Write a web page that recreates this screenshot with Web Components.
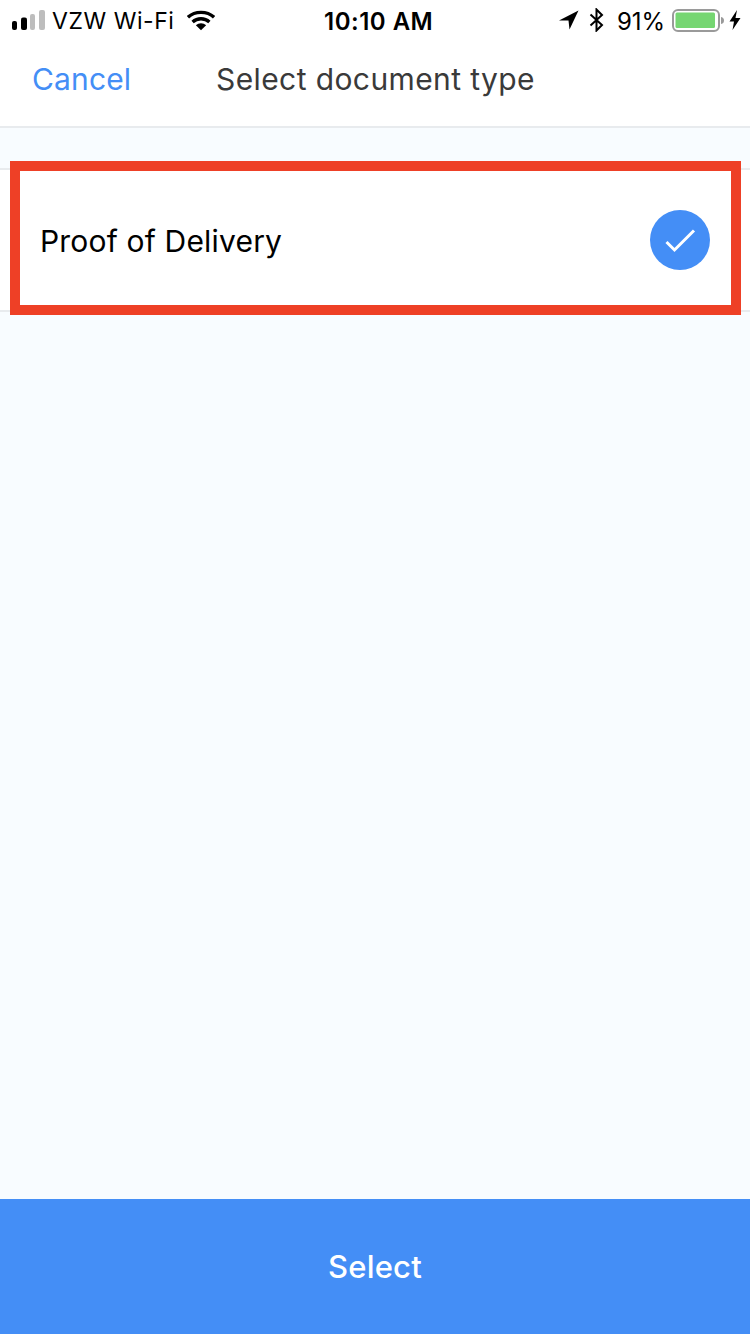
<!DOCTYPE html>
<html lang="en">
<head>
<meta charset="utf-8">
<title>Select document type</title>
<style>
  html, body { margin: 0; height: 100%; }
  body { font-family: Inter, "Liberation Sans", sans-serif; }
</style>
</head>
<body>
<doc-screen>
  <status-bar slot="status"></status-bar>
  <nav-header slot="header" action="Cancel">Select document type</nav-header>
  <doc-row slot="body" highlighted>Proof of Delivery</doc-row>
  <primary-button slot="footer">Select</primary-button>
</doc-screen>

<script>
class DocScreen extends HTMLElement {
  constructor() {
    super();
    this.attachShadow({ mode: "open" }).innerHTML = `
      <style>
        :host { display: flex; flex-direction: column; width: 750px; height: 1334px; background: #f8fcff; }
        .body { flex: 1; padding-top: 40px; }
      </style>
      <slot name="status"></slot>
      <slot name="header"></slot>
      <div class="body"><slot name="body"></slot></div>
      <slot name="footer"></slot>
    `;
  }
}

class StatusBar extends HTMLElement {
  constructor() {
    super();
    this.attachShadow({ mode: "open" }).innerHTML = `
      <style>
        :host { display: grid; grid-template-columns: 324px 108px 1fr; align-items: center; height: 40px; background: #fff; color: #000; font: 400 23px Inter, "Liberation Sans", sans-serif; }
        .left, .right { display: flex; align-items: center; }
        .left { padding-left: 12px; }
        .signal { display: block; margin-right: 7px; }
        .carrier { letter-spacing: 0.55px; white-space: nowrap; padding-top: 1px; }
        .wifi { margin-left: 13px; }
        .time { font-weight: 600; font-size: 24px; white-space: nowrap; text-align: center; letter-spacing: 0.5px; padding-top: 2px; }
        .right { padding-left: 127px; }
        .pct { margin: 0 7px 0 13px; font-size: 24px; white-space: nowrap; letter-spacing: -0.1px; padding-top: 2px; }
        .loc, .bt, .bat, .bolt { display: block; flex: none; }
        .bt { margin-left: 10px; }
        .bolt { margin-left: 5px; }
      </style>
      <div class="left">
        <svg class="signal" width="33" height="21" viewBox="0 0 33 21">
          <rect x="0" y="11" width="5" height="9" rx="2" fill="#000"/>
          <rect x="9" y="7.500" width="6" height="12.500" rx="2" fill="#000"/>
          <rect x="18" y="4" width="5" height="16" rx="2" fill="#bdbdbd"/>
          <rect x="27" y="0" width="6" height="20" rx="2" fill="#bdbdbd"/>
        </svg>
        <span class="carrier">VZW Wi-Fi</span>
        <svg class="wifi" width="28" height="21" viewBox="0 0 30 22">
          <path d="M1 7.500C8.500 0.500 21.500 0.500 29 7.500" fill="none" stroke="#000" stroke-width="3.600"/>
          <path d="M6 12.500C11 8 19 8 24 12.500" fill="none" stroke="#000" stroke-width="3.600"/>
          <path d="M9.500 16.200C12.500 13.200 17.500 13.200 20.500 16.200L15 21.500Z" fill="#000"/>
        </svg>
      </div>
      <div class="time">10:10 AM</div>
      <div class="right">
        <svg class="loc" width="20" height="20" viewBox="0 0 20 20"><path d="M0 10.500L19.500 0.500L10.500 19.500L9.500 10.500Z" fill="#000"/></svg>
        <svg class="bt" width="15" height="24" viewBox="0 0 15 24"><path d="M1.500 6.500L13 17L7.500 22.500V1.500L13 7L1.500 17.500" fill="none" stroke="#000" stroke-width="2"/></svg>
        <span class="pct">91%</span>
        <svg class="bat" width="52" height="24" viewBox="0 0 52 24">
          <rect x="1" y="2" width="46" height="21" rx="5" fill="none" stroke="#9a9a9a" stroke-width="2"/>
          <rect x="3.500" y="4.500" width="39.500" height="15.500" rx="1.500" fill="#76d672"/>
          <path d="M49 9C51.500 9.500 52 11 52 12.500C52 14 51.500 15.500 49 16Z" fill="#9a9a9a"/>
        </svg>
        <svg class="bolt" width="12" height="20" viewBox="0 0 12 20"><path d="M8 0L0.500 11.500H5L3.500 20L11.500 8H6.500Z" fill="#000"/></svg>
      </div>
    `;
  }
}

class NavHeader extends HTMLElement {
  constructor() {
    super();
    this.attachShadow({ mode: "open" }).innerHTML = `
      <style>
        :host { display: flex; align-items: center; box-sizing: border-box; height: 88px; padding: 0 0 8px 32px; background: #fff; border-bottom: 2px solid #e8ebee; font: 400 30px Inter, "Liberation Sans", sans-serif; white-space: nowrap; }
        .action { width: 184px; color: #448ef6; letter-spacing: 0.15px; }
        .title { color: #3a3a3a; letter-spacing: 0.4px; }
      </style>
      <span class="action"></span>
      <span class="title"><slot></slot></span>
    `;
    this.shadowRoot.querySelector(".action").textContent = this.getAttribute("action");
  }
}

class DocRow extends HTMLElement {
  constructor() {
    super();
    this.attachShadow({ mode: "open" }).innerHTML = `
      <style>
        :host { display: flex; align-items: center; justify-content: space-between; position: relative; box-sizing: border-box; height: 144px; padding: 0 40px; background: #fff; border-top: 2px solid #e8ebee; border-bottom: 2px solid #e8ebee; color: #000; font: 400 30px Inter, "Liberation Sans", sans-serif; }
        .label { padding-top: 2px; letter-spacing: 0.18px; }
        .check { display: block; }
        .mark { display: none; position: absolute; left: 10px; top: -9px; width: 731px; height: 154px; box-sizing: border-box; border: 10px solid #ee4026; pointer-events: none; }
        :host([highlighted]) .mark { display: block; }
      </style>
      <span class="label"><slot></slot></span>
      <svg class="check" width="60" height="60" viewBox="0 0 60 60">
        <circle cx="30" cy="30" r="30" fill="#448ef6"/>
        <path d="M16.500 32L24.500 40L44 20.500" fill="none" stroke="#fff" stroke-width="3"/>
      </svg>
      <div class="mark"></div>
    `;
  }
}

class PrimaryButton extends HTMLElement {
  constructor() {
    super();
    this.attachShadow({ mode: "open" }).innerHTML = `
      <style>
        :host { display: flex; align-items: center; justify-content: center; height: 135px; background: #448ef6; color: #fff; font: 500 31px Inter, "Liberation Sans", sans-serif; letter-spacing: 0.2px; }
      </style>
      <slot></slot>
    `;
  }
}

customElements.define("doc-screen", DocScreen);
customElements.define("status-bar", StatusBar);
customElements.define("nav-header", NavHeader);
customElements.define("doc-row", DocRow);
customElements.define("primary-button", PrimaryButton);
</script>
</body>
</html>
